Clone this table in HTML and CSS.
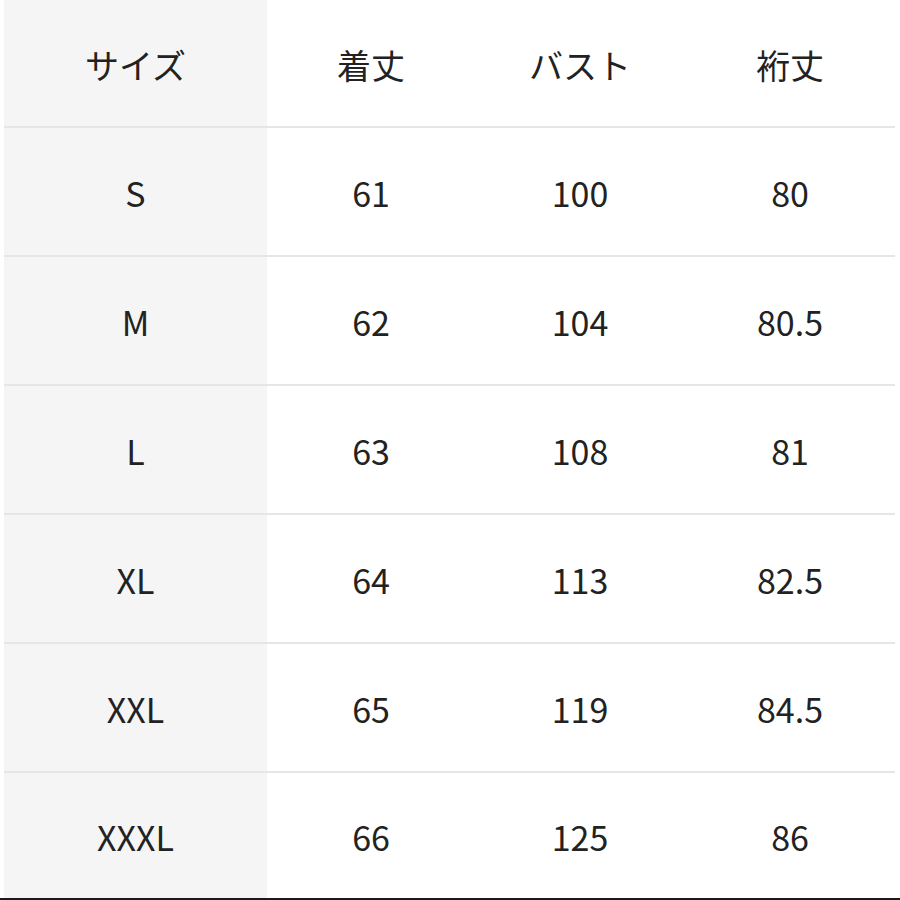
FILE: index.html
```html
<!DOCTYPE html>
<html lang="ja">
<head>
<meta charset="utf-8">
<link rel="stylesheet" href="styles.css">
</head>
<body>
<div class="page">
  <div class="table">
    <div class="row head"><div class="cell first">サイズ</div><div class="cell">着丈</div><div class="cell">バスト</div><div class="cell">裄丈</div></div>
    <div class="row"><div class="cell first">S</div><div class="cell">61</div><div class="cell">100</div><div class="cell">80</div></div>
    <div class="row"><div class="cell first">M</div><div class="cell">62</div><div class="cell">104</div><div class="cell">80.5</div></div>
    <div class="row"><div class="cell first">L</div><div class="cell">63</div><div class="cell">108</div><div class="cell">81</div></div>
    <div class="row"><div class="cell first">XL</div><div class="cell">64</div><div class="cell">113</div><div class="cell">82.5</div></div>
    <div class="row"><div class="cell first">XXL</div><div class="cell">65</div><div class="cell">119</div><div class="cell">84.5</div></div>
    <div class="row last"><div class="cell first">XXXL</div><div class="cell">66</div><div class="cell">125</div><div class="cell">86</div></div>
  </div>
</div>
</body>
</html>
```

FILE: styles.css
```css
html, body {
  margin: 0;
  padding: 0;
  background: #ffffff;
}
body {
  width: 900px;
  height: 900px;
  overflow: hidden;
  font-family: "Noto Sans CJK JP", "Noto Sans", sans-serif;
  color: #222222;
}
.page {
  height: 898px;
  border-bottom: 2px solid #1a1a1a;
  padding-left: 4px;
}
.table {
  width: 891px;
  display: flex;
  flex-direction: column;
}
.row {
  display: grid;
  grid-template-columns: 263px 208px 210px 210px;
  height: 127px;
  border-bottom: 2px solid #e6e6e6;
}
.row.head {
  height: 126px;
}
.row.last {
  height: 125px;
  border-bottom: none;
}
.cell {
  display: flex;
  align-items: center;
  justify-content: center;
  font-size: 34px;
  line-height: 1;
  padding-top: 2px;
}
.cell.first {
  background: #f5f5f5;
}
.head .cell {
  padding-top: 4px;
}
```
